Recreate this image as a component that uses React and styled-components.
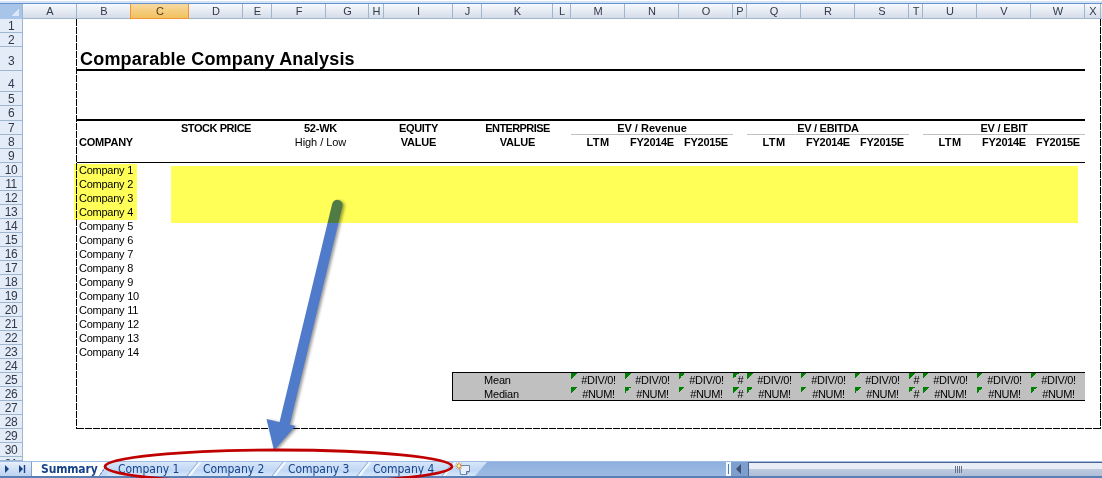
import React from 'react'
import styled, { createGlobalStyle } from 'styled-components'

const COLUMNS = [
    ['A', 54], ['B', 54], ['C', 58], ['D', 54], ['E', 29], ['F', 54], ['G', 43], ['H', 15],
    ['I', 69], ['J', 29], ['K', 71], ['L', 18], ['M', 54], ['N', 54], ['O', 54], ['P', 14],
    ['Q', 54], ['R', 54], ['S', 54], ['T', 14], ['U', 54], ['V', 54], ['W', 54], ['X', 16],
]
const TEMPLATE = `23px ${COLUMNS.map(([, w]) => `${w}px`).join(' ')} 1px`
const LAST = 31
const HEIGHTS = { 3: 24, 4: 21, 6: 15, 31: 4 }
const OFFSETS = { 3: 7, 4: 6 }

// grid line of a column, the row header takes the first one
const col = (letter) => COLUMNS.findIndex(([name]) => name === letter) + 2

const GROUPS = [
    { title: 'EV / Revenue', cols: ['M', 'N', 'O'], spacing: 0 },
    { title: 'EV / EBITDA', cols: ['Q', 'R', 'S'], spacing: -0.3 },
    { title: 'EV / EBIT', cols: ['U', 'V', 'W'], spacing: -0.2 },
]
const PERIODS = ['LTM', 'FY2014E', 'FY2015E']
const STAT_COLUMNS = ['M', 'N', 'O', 'P', 'Q', 'R', 'S', 'T', 'U', 'V', 'W']
const SHEETS = ['Company 1', 'Company 2', 'Company 3', 'Company 4']

const StatCells = ({ label, error, last }) => (
    <>
        <StatLabel $last={last}>{label}</StatLabel>
        {STAT_COLUMNS.map((name) => (
            <StatCell key={name} $from={col(name)} $last={last}>
                {name === 'P' || name === 'T' ? '#' : error}
            </StatCell>
        ))}
    </>
)

const RowContent = ({ row }) => {
    if (row === 3) return <Title>Comparable Company Analysis</Title>
    if (row === 6) return <Rule $size={2} />
    if (row === 7) {
        return (
            <>
                <Head $from={col('D')} $to={col('E')} $spacing={-0.45}>STOCK PRICE</Head>
                <Head $from={col('F')} $to={col('H')}>52-WK</Head>
                <Head $from={col('I')} $to={col('J')} $spacing={-0.35}>EQUITY</Head>
                <Head $from={col('K')} $to={col('L')} $spacing={-0.6}>ENTERPRISE</Head>
                {GROUPS.map(({ title, cols, spacing }) => (
                    <GroupHead key={title} $from={col(cols[0])} $to={col(cols[2]) + 1} $spacing={spacing}>
                        {title}
                    </GroupHead>
                ))}
            </>
        )
    }
    if (row === 8) {
        return (
            <>
                <Head $from={col('B')} $to={col('D')} $left>COMPANY</Head>
                <Head $from={col('F')} $to={col('H')} $light $spacing={-0.05}>High / Low</Head>
                <Head $from={col('I')} $to={col('J')}>VALUE</Head>
                <Head $from={col('K')} $to={col('L')}>VALUE</Head>
                {GROUPS.map(({ cols }) => cols.map((name, i) => (
                    <Head key={name} $from={col(name)} $to={col(name) + 1} $spacing={i === 0 ? 0.4 : -0.3}>
                        {PERIODS[i]}
                    </Head>
                )))}
            </>
        )
    }
    if (row === 9) return <Rule $size={1} />
    if (row >= 10 && row <= 23) return <CompanyCell>Company {row - 9}</CompanyCell>
    if (row === 24) return <StatTop />
    if (row === 25) return <StatCells label='Mean' error='#DIV/0!' />
    if (row === 26) return <StatCells label='Median' error='#NUM!' last />
    return null
}

const App = () => (
    <Window>
        <GlobalStyle />
        <Strip />
        <ColumnHeader>
            <SelectAll />
            {COLUMNS.map(([name]) => (
                <ColumnName key={name} $active={name === 'C'}>{name}</ColumnName>
            ))}
        </ColumnHeader>
        <Sheet>
            {Array.from({ length: LAST }, (_, i) => i + 1).map((row) => (
                <Row key={row} $height={HEIGHTS[row] || 14}>
                    <RowNumber $offset={OFFSETS[row] || 0}>{row}</RowNumber>
                    <RowContent row={row} />
                </Row>
            ))}
        </Sheet>
        <BottomBar>
            <Nav>
                <svg width='31' height='14' viewBox='0 0 31 14'>
                    <path d='M5 3v8l4-4zM19 3v8l4-4z' fill='#15428b' />
                    <path d='M24.5 3v8' stroke='#15428b' strokeWidth='1.4' />
                </svg>
            </Nav>
            <Tabs>
                <SummaryTab>Summary</SummaryTab>
                {SHEETS.map((name) => <Tab key={name}>{name}</Tab>)}
                <NewTab>
                    <svg width='16' height='14' viewBox='0 0 16 14'>
                        <path d='M4.5 3.5h10v6l-3 3h-6z' fill='#e9f0fa' stroke='#6f86ab' />
                        <path d='M11.5 12.5v-3h3' fill='#b6c9e3' stroke='#56739f' />
                        <path d='M4 .5v7M.5 4h7M1.5 1.5l5 5M6.5 1.5l-5 5' stroke='#d98a1c' />
                        <circle cx='4' cy='4' r='1.4' fill='#fff3b0' />
                    </svg>
                </NewTab>
            </Tabs>
            <Splitter />
            <ScrollLeft>
                <svg width='6' height='10' viewBox='0 0 6 10'>
                    <path d='M5 0v10L0 5z' fill='#41506e' />
                </svg>
            </ScrollLeft>
            <Thumb>
                <Grip />
            </Thumb>
        </BottomBar>
        <PrintArea width='1102' height='478' viewBox='0 0 1102 478'>
            <path d='M76.5 19V428.5' />
            <path d='M76.5 428.5H1101' />
            <path d='M1100.5 19V428.5' />
        </PrintArea>
        <Annotations width='1102' height='478' viewBox='0 0 1102 478'>
            <g className='arrow'>
                <path d='M337.3 205L284 426' stroke='#4f7bca' strokeWidth='10.5' strokeLinecap='round' />
                <path d='M266.5 419L295.5 426L274 450.5z' fill='#4f7bca' />
            </g>
            <ellipse cx='278.5' cy='466.5' rx='173.5' ry='16.5' fill='none' stroke='#c00000' strokeWidth='2.8' />
        </Annotations>
        <Marker $left={74} $top={164} $width={63} $height={56} />
        <Marker $left={171} $top={166} $width={907} $height={57} />
    </Window>
)

export default App


const GlobalStyle = createGlobalStyle`
    body {
        margin: 0;
        background-color: white;
    }

    * {
        box-sizing: border-box;
    }
`;

const Window = styled.div`
    position: relative;
    width: 1102px;
    height: 478px;
    overflow: hidden;
    font-family: 'Liberation Sans', Arial, sans-serif;
    color: black;
`;

const Strip = styled.div`
    height: 4px;
    background: linear-gradient(white 1px, #d3e2f5 1px);
    border-bottom: 1px solid #6593cf;
`;

const ColumnHeader = styled.div`
    display: grid;
    grid-template-columns: ${TEMPLATE};
    height: 15px;
    background: linear-gradient(#f7fafd, #d5dce8);
    border-bottom: 1px solid #9eb6ce;
`;

const SelectAll = styled.div`
    background: linear-gradient(135deg, transparent 50%, #dce7f6 50%) no-repeat 12px 5px / 7px 7px, #a9c4e9;
    border-right: 1px solid #9eb6ce;
`;

const ColumnName = styled.div`
    display: flex;
    justify-content: center;
    height: 15px;
    padding-left: 1px;
    font-size: 11px;
    line-height: 15px;
    color: ${({ $active }) => $active ? '#4f3a1c' : '#2f3a4c'};
    border-right: 1px solid ${({ $active }) => $active ? '#f29436' : '#9eb6ce'};
    ${({ $active }) => $active && `
        background: linear-gradient(#f8d9a0, #f1c15e);
        border-bottom: 1px solid #f29436;
        box-shadow: -1px 0 #f29436;
    `}
`;

const Sheet = styled.div`
    height: 442px;
    overflow: hidden;
`;

const Row = styled.div`
    display: grid;
    grid-template-columns: ${TEMPLATE};
    grid-template-rows: 100%;
    height: ${({ $height }) => $height}px;

    > * {
        grid-row: 1;
    }
`;

const RowNumber = styled.div`
    grid-column: 1;
    overflow: hidden;
    padding-top: ${({ $offset }) => $offset}px;
    font-size: 12px;
    line-height: 14px;
    letter-spacing: -0.5px;
    text-align: center;
    color: #2f3a4c;
    background-color: #e4ecf7;
    border-right: 1px solid #9eb6ce;
    border-bottom: 1px solid #9eb6ce;
`;

const Title = styled.div`
    grid-column: ${col('B')} / ${col('X')};
    padding-left: 3px;
    font-size: 18px;
    font-weight: bold;
    line-height: 24px;
    letter-spacing: 0.2px;
    border-bottom: 2px solid black;
`;

const Rule = styled.div`
    grid-column: ${col('B')} / ${col('X')};
    border-bottom: ${({ $size }) => $size}px solid black;
`;

const Head = styled.div`
    display: flex;
    justify-content: ${({ $left }) => $left ? 'flex-start' : 'center'};
    grid-column: ${({ $from, $to }) => `${$from} / ${$to}`};
    padding-left: ${({ $left }) => $left ? 2 : 0}px;
    font-size: 11px;
    font-weight: ${({ $light }) => $light ? 'normal' : 'bold'};
    line-height: 15px;
    letter-spacing: ${({ $spacing = -0.2 }) => $spacing}px;
    white-space: nowrap;
`;

const GroupHead = styled(Head)`
    border-bottom: 1px solid #c0c0c0;
`;

const CompanyCell = styled.div`
    grid-column: ${col('B')} / ${col('D')};
    padding-left: 2px;
    font-size: 11px;
    line-height: 15px;
    letter-spacing: -0.25px;
`;

const StatTop = styled.div`
    grid-column: ${col('J')} / ${col('X')};
    margin-left: -1px;
    border-bottom: 1px solid black;
`;

const StatLabel = styled.div`
    grid-column: ${col('J')} / ${col('M')};
    margin-left: -1px;
    padding-left: 31px;
    font-size: 11px;
    line-height: 15px;
    letter-spacing: -0.2px;
    background-color: #c0c0c0;
    border-left: 1px solid black;
    border-bottom: ${({ $last }) => $last ? '1px solid black' : 'none'};
`;

const StatCell = styled.div`
    display: flex;
    justify-content: center;
    grid-column: ${({ $from }) => $from};
    padding-left: 1px;
    font-size: 11px;
    line-height: 15px;
    letter-spacing: -0.3px;
    background: linear-gradient(135deg, #008000 50%, transparent 50%) no-repeat 0 0 / 6px 6px, #c0c0c0;
    border-bottom: ${({ $last }) => $last ? '1px solid black' : 'none'};
`;

const BottomBar = styled.div`
    display: flex;
    isolation: isolate;
    height: 17px;
    background: linear-gradient(#8eb0de, #9dbae2);
    border-top: 1px solid #9ebbe2;
    border-bottom: 2px solid #5a7fb5;
`;

const Nav = styled.div`
    display: flex;
    width: 32px;
    background: linear-gradient(#e6effb, #bcd2ef);
    border-right: 1px solid #7d9fd0;
`;

const Tabs = styled.div`
    display: flex;
    width: 694px;
    font-family: 'DejaVu Sans Condensed', 'DejaVu Sans', sans-serif;
    font-size: 12px;
    line-height: 15px;
    color: #15428b;
`;

const SummaryTab = styled.div`
    width: 75px;
    padding-left: 9px;
    font-weight: bold;
    letter-spacing: -0.15px;
    background: linear-gradient(125deg, white 90%, #7d9fd0 90% 91.5%, #c6daf5 91.5%);
`;

const Tab = styled.div`
    position: relative;
    width: 85px;
    padding-left: 11px;
    letter-spacing: -0.05px;
    white-space: nowrap;
    background: linear-gradient(#d8e6f9, #c0d7f4 60%, #d6e7fb);

    &::after {
        content: '';
        position: absolute;
        top: 0;
        right: -4px;
        width: 3px;
        height: 14px;
        background-color: #f4f9ff;
        border-left: 1px solid #7d9fd0;
        transform: skewX(-38deg);
        z-index: 1;
    }
`;

const NewTab = styled.div`
    width: 40px;
    padding-left: 8px;
    background: linear-gradient(#d8e6f9, #c0d7f4 60%, #d6e7fb);
    clip-path: polygon(0 0, 100% 0, calc(100% - 12px) 100%, 0 100%);
`;

const Splitter = styled.div`
    width: 5px;
    background-color: #4f7bb8;
    border: 2px solid #f2f7fd;
`;

const ScrollLeft = styled.div`
    display: flex;
    align-items: center;
    width: 17px;
    padding-left: 5px;
    background-color: #7d9fd0;
`;

const Thumb = styled.div`
    display: flex;
    flex: 1;
    align-items: center;
    padding-left: 206px;
    background: linear-gradient(#e9eef6 0 45%, #bccade 50%, #b0bfd8);
    border-top: 1px solid #4b6593;
    border-left: 1px solid #4b6593;
`;

const Grip = styled.div`
    width: 8px;
    height: 7px;
    background: repeating-linear-gradient(90deg, #66738c 0 1px, transparent 1px 2px);
`;

const PrintArea = styled.svg`
    position: absolute;
    top: 0;
    left: 0;
    fill: none;
    stroke: black;
    stroke-dasharray: 7 1;
    shape-rendering: crispEdges;
`;

const Annotations = styled.svg`
    position: absolute;
    top: 0;
    left: 0;

    .arrow {
        filter: drop-shadow(2px 1px 1.5px rgba(0, 0, 0, 0.4));
    }
`;

const Marker = styled.div`
    position: absolute;
    top: ${({ $top }) => $top}px;
    left: ${({ $left }) => $left}px;
    width: ${({ $width }) => $width}px;
    height: ${({ $height }) => $height}px;
    background-color: #ffff57;
    mix-blend-mode: multiply;
`;
